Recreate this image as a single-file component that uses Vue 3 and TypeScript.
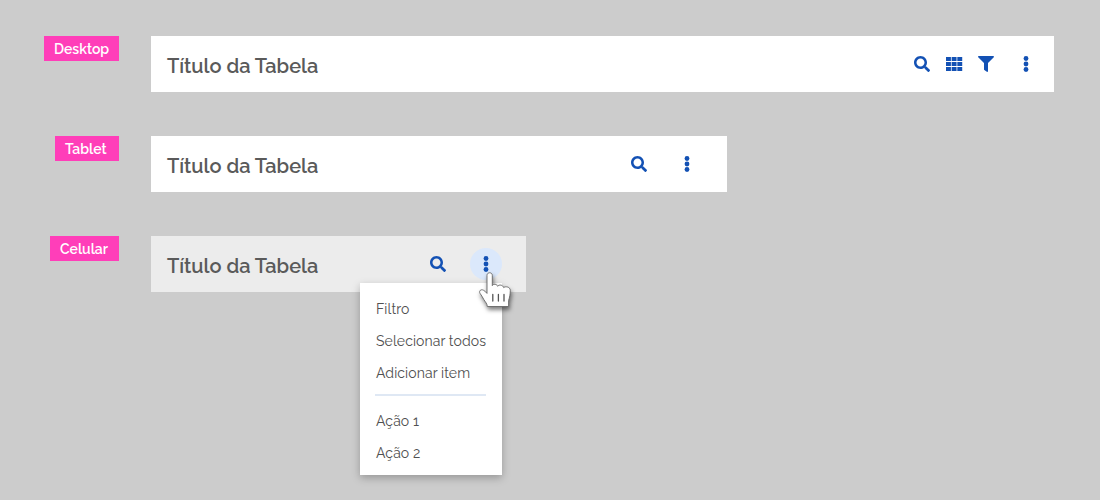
<script setup lang="ts">
interface Row { label: string; kind: string; icons: string[] }
const rows: Row[] = [
  { label: 'Desktop', kind: 'desktop', icons: ['search', 'grid', 'filter'] },
  { label: 'Tablet', kind: 'tablet', icons: ['search'] },
  { label: 'Celular', kind: 'mobile', icons: ['search'] },
]
const primary: string[] = ['Filtro', 'Selecionar todos', 'Adicionar item']
const secondary: string[] = ['Ação 1', 'Ação 2']
</script>

<template>
  <main class="board">
    <section v-for="row in rows" :key="row.kind" class="row" :class="row.kind">
      <div class="tag-cell"><span class="tag">{{ row.label }}</span></div>
      <header class="bar">
        <h2 class="title">Título da Tabela</h2>
        <div class="actions">
          <svg v-for="icon in row.icons" :key="icon" class="icon" viewBox="0 0 512 512">
            <path v-if="icon === 'search'" d="M505 442.7L405.3 343c-4.5-4.5-10.6-7-17-7H372c27.6-35.3 44-79.7 44-128C416 93.1 322.9 0 208 0S0 93.1 0 208s93.1 208 208 208c48.3 0 92.7-16.4 128-44v16.3c0 6.4 2.5 12.5 7 17l99.7 99.7c9.4 9.4 24.6 9.4 33.9 0l28.3-28.3c9.4-9.4 9.4-24.6.1-34zM208 336c-70.7 0-128-57.2-128-128 0-70.7 57.2-128 128-128 70.7 0 128 57.2 128 128 0 70.7-57.2 128-128 128z" />
            <path v-else-if="icon === 'grid'" d="M0 32h157v128H0zM181 32h157v128H181zM362 32h157v128H362zM0 192h157v128H0zM181 192h157v128H181zM362 192h157v128H362zM0 352h157v128H0zM181 352h157v128H181zM362 352h157v128H362z" />
            <path v-else d="M487.976 0H24.028C2.71 0-8.047 25.866 7.058 40.971L192 225.941V432c0 7.831 3.821 15.17 10.237 19.662l80 55.98C298.02 518.69 320 507.493 320 487.98V225.941l184.947-184.97C520.021 25.896 509.338 0 487.976 0z" />
          </svg>
          <span class="more">
            <svg class="icon" viewBox="0 0 16 16">
              <circle cx="8" cy="2.5" r="2.4" /><circle cx="8" cy="8" r="2.4" /><circle cx="8" cy="13.5" r="2.4" />
            </svg>
          </span>
        </div>
        <template v-if="row.kind === 'mobile'">
          <nav class="menu">
            <div v-for="item in primary" :key="item" class="item">{{ item }}</div>
            <hr class="divider">
            <div v-for="item in secondary" :key="item" class="item">{{ item }}</div>
          </nav>
          <svg class="cursor" viewBox="0 0 36 40">
            <path class="hand" d="M9 22V4.4C9 .9 14.3.9 14.3 4.4V14.6C15 12.8 18.8 12.8 19.7 15.3C20.8 13.3 24.8 13.8 25.7 16.6C27.5 15 32.3 15.8 32.3 19.5C32.3 23 31.6 26.5 30.6 29.5V35.5H9.3C9.2 32.6 7.3 31 5.8 28.5C4.5 26.2 3.6 24.4 2 22.3C.6 20 3.1 17.7 5.6 19.3C7.2 20.3 8 21.2 9 22.4Z" />
            <path class="lines" d="M14.8 23.5v6.5M20.4 23.5v6.5M26 23.5v6.5" />
          </svg>
        </template>
      </header>
    </section>
  </main>
</template>

<style>
body { background: #ccc; }
</style>

<style scoped>
.board { box-sizing: border-box; height: 500px; padding-top: 36px; background: #ccc; overflow: hidden; font-family: Raleway, Lato, "Open Sans", sans-serif; }
.row { display: flex; align-items: flex-start; height: 56px; margin-bottom: 44px; }
.tag-cell { width: 119px; margin-right: 32px; display: flex; justify-content: flex-end; }
.tag { box-sizing: border-box; width: 75px; height: 25px; padding-left: 10px; background: #ff3eb9; color: #fff; font-size: 14px; font-weight: 600; line-height: 26px; white-space: nowrap; }
.tablet .tag { width: 64px; }
.mobile .tag { width: 69px; }
.bar { position: relative; box-sizing: border-box; width: 903px; height: 56px; padding: 0 12px 0 16px; display: flex; align-items: center; justify-content: space-between; background: #fff; }
.tablet .bar { width: 576px; padding-right: 24px; }
.mobile .bar { width: 375px; padding-right: 24px; background: #ececec; }
.title { margin: 3px 0 0; color: #5a5a5a; font-size: 20px; font-weight: 600; line-height: 28px; white-space: nowrap; }
.actions { display: flex; align-items: center; gap: 16px; }
.icon { display: block; width: 16px; height: 16px; overflow: visible; fill: #1351b4; }
.more { display: flex; align-items: center; justify-content: center; width: 32px; height: 32px; border-radius: 50%; }
.tablet .more, .mobile .more { margin-left: 8px; }
.mobile .more { background: #dbe8fb; }
.menu { position: absolute; top: 47px; right: 24px; box-sizing: border-box; width: 142px; height: 192px; padding: 10px 16px 6px; background: #fff; box-shadow: 0 3px 8px rgba(0, 0, 0, 0.26); }
.item { height: 32px; color: #505050; font-size: 14px; font-weight: 400; letter-spacing: 0.1px; line-height: 32px; white-space: nowrap; }
.divider { height: 2px; margin: 5px 0 9px -1px; border: 0; background: #dfe8f4; }
.cursor { position: absolute; top: 35px; left: 327px; width: 36px; height: 40px; overflow: visible; filter: drop-shadow(1px 3px 2px rgba(0, 0, 0, 0.5)); }
.hand { fill: #fff; stroke: #666; stroke-width: 0.9; stroke-linejoin: round; }
.lines { fill: none; stroke: #555; stroke-width: 1.3; stroke-linecap: round; }
</style>
